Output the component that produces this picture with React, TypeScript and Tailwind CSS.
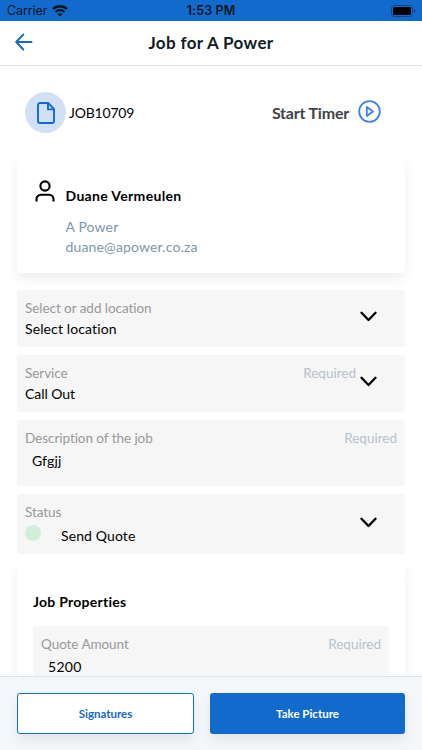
import type { ReactNode } from 'react';
import clsx from 'clsx';

function Chevron() {
  return (
    <svg className="w-[17px] h-[11px] shrink-0" viewBox="0 0 17 11" fill="none" stroke="#000" strokeWidth="2.3" strokeLinecap="round" strokeLinejoin="round">
      <path d="M1.5 1.8 8.5 9l7-7.2" />
    </svg>
  );
}

function StatusBar() {
  return (
    <div className="h-[21px] shrink-0 bg-[#126acd] grid grid-cols-3 items-center px-[7px] font-['Inter'] text-[12.5px] leading-[21px] text-[#0b1520]">
      <div className="flex items-center gap-[5px]">
        <span className="-tracking-[0.1px]">Carrier</span>
        <svg className="w-[16px] h-[12px]" viewBox="0 0 16 12" fill="none" stroke="#061322">
          <path d="M1 4.1a10 10 0 0 1 14 0" strokeWidth="2.3" />
          <path d="M3.6 6.9a6.3 6.3 0 0 1 8.8 0" strokeWidth="2.1" />
          <path d="M8 11.6 5.6 9.2a3.4 3.4 0 0 1 4.8 0Z" fill="#061322" stroke="none" />
        </svg>
      </div>
      <span className="text-center font-semibold tracking-[0.1px]">1:53 PM</span>
      <svg className="w-[25px] h-[12px] justify-self-end relative left-[1px]" viewBox="0 0 25 12">
        <rect x="0.5" y="0.5" width="21" height="11" rx="3" fill="none" stroke="#0c4688" />
        <rect x="2" y="2" width="18" height="8" rx="1.6" fill="#000" />
        <path d="M23 4v4c.9-.4 1.4-1.1 1.4-2S23.9 4.4 23 4Z" fill="#0c4688" />
      </svg>
    </div>
  );
}

type FieldProps = {
  label: string;
  required?: boolean;
  dropdown?: boolean;
  className?: string;
  children: ReactNode;
};

function Field({ label, required, dropdown, className, children }: FieldProps) {
  return (
    <div className={clsx('flex rounded-[3px] bg-[#f6f6f6] px-2', className)}>
      <div className="flex-1 pt-[7px]">
        <div className="flex justify-between pt-[1px] text-[13.5px] leading-[20px]">
          <span className="text-[#97999b] -tracking-[0.05px]">{label}</span>
          {required && <span className="text-[#b7c1cb] tracking-normal">Required</span>}
        </div>
        {children}
      </div>
      {dropdown && (
        <div className="flex items-center pl-[4px] pr-5 pb-[4px]">
          <Chevron />
        </div>
      )}
    </div>
  );
}

export default function App() {
  return (
    <div className="w-full h-[750px] flex flex-col overflow-hidden bg-white font-['Lato',sans-serif] text-[14px] text-black [font-variant-ligatures:none]">
      <StatusBar />

      <header className="h-[45px] shrink-0 grid grid-cols-[40px_1fr_40px] items-center px-[15px] border-b border-[#e6e8ea]">
        <svg className="w-[18px] h-[18px] relative -top-[1px]" viewBox="0 0 18 18" fill="none" stroke="#126acd" strokeWidth="1.9" strokeLinecap="round" strokeLinejoin="round">
          <path d="M16.5 9H1.5M8.3 1.5 1.2 9l7.1 7.5" />
        </svg>
        <h1 className="text-center text-[17px] font-bold tracking-[0.35px] text-[#111c27]">Job for A Power</h1>
      </header>

      <main className="flex-1 min-h-0 overflow-hidden px-[17px]">
        <div className="flex items-center justify-between h-[41px] mt-[26px] pl-2 pr-6">
          <div className="flex items-center gap-[3px]">
            <div className="w-[41px] h-[41px] rounded-full bg-[#d1e0f4] flex items-center justify-center">
              <svg className="w-[18px] h-[22px]" viewBox="0 0 18 22" fill="none" stroke="#126acd" strokeWidth="1.9" strokeLinejoin="round">
                <path d="M11.2 1H3a2 2 0 0 0-2 2v16a2 2 0 0 0 2 2h12a2 2 0 0 0 2-2V7.2Z" />
                <path d="M11 1v6.4h6" />
              </svg>
            </div>
            <span className="-tracking-[0.2px]">JOB10709</span>
          </div>
          <div className="flex items-center gap-[9px]">
            <span className="text-[16px] font-bold -tracking-[0.2px] text-[#404247]">Start Timer</span>
            <svg className="w-[23px] h-[23px] relative -top-[1px]" viewBox="0 0 23 23" fill="none" stroke="#3d7ff0" strokeWidth="1.8" strokeLinejoin="round">
              <circle cx="11.5" cy="11.5" r="10.3" />
              <path d="m8.8 7 6.2 4.5L8.800 16Z" />
            </svg>
          </div>
        </div>

        <section className="flex h-[117px] mt-[23px] pl-[18px] pt-[23px] rounded-[4px] bg-white shadow-[0_6px_12px_rgba(0,0,0,0.07)]">
          <svg className="w-5 h-[22px] mt-[1px]" viewBox="0 0 20 22" fill="none" stroke="#000" strokeWidth="2.1">
            <circle cx="10" cy="6" r="4.6" />
            <path d="M1.5 21.5v-2.3a4.500 4.500 0 0 1 4.500-4.500h8a4.500 4.500 0 0 1 4.500 4.500v2.300" />
          </svg>
          <div className="ml-[10.5px] pt-[7px] leading-5">
            <p className="font-bold tracking-[0.33px]">Duane Vermeulen</p>
            <p className="mt-[11px] tracking-[0.15px] text-[#7d97aa]">A Power</p>
            <p className="tracking-[0.15px] text-[#7d97aa]">duane@apower.co.za</p>
          </div>
        </section>

        <div className="flex flex-col gap-2 mt-[17px] leading-[21px] tracking-[0.12px]">
          <Field label="Select or add location" dropdown className="h-[57px]">
            <p>Select location</p>
          </Field>
          <Field label="Service" required dropdown className="h-[57px]">
            <p className="-tracking-[0.05px]">Call Out</p>
          </Field>
          <Field label="Description of the job" required className="h-[66px]">
            <p className="pl-[7px] pt-[2px]">Gfgjj</p>
          </Field>
          <Field label="Status" dropdown className="h-[60px]">
            <div className="flex">
              <span className="w-4 h-4 mt-[3px] rounded-full bg-[#d3eed8]" />
              <span className="ml-5 pt-[3px]">Send Quote</span>
            </div>
          </Field>
        </div>

        <section className="h-[220px] mt-2 px-4 pt-[29px] rounded-[4px] bg-white shadow-[0_6px_12px_rgba(0,0,0,0.07)]">
          <h2 className="font-bold leading-[21px] tracking-[0.25px]">Job Properties</h2>
          <Field label="Quote Amount" required className="h-[66px] mt-[14px]">
            <p className="pl-[7px] pt-[2px] leading-[21px] tracking-[0.3px]">5200</p>
          </Field>
        </section>
      </main>

      <footer className="relative h-[74px] shrink-0 flex gap-4 px-[17px] pt-4 bg-[#f3f7fa] border-t border-[#dfe2e5]">
        <button className="w-[177px] h-[41px] rounded-[3px] border border-[#126acd] bg-white text-[11.5px] font-bold text-[#126acd] shadow-[0_6px_12px_rgba(0,0,0,0.07)]">
          Signatures
        </button>
        <button className="flex-1 h-[41px] rounded-[3px] bg-[#126acd] text-[11.5px] font-bold text-white shadow-[0_6px_12px_rgba(0,0,0,0.07)]">
          Take Picture
        </button>
      </footer>
    </div>
  );
}
